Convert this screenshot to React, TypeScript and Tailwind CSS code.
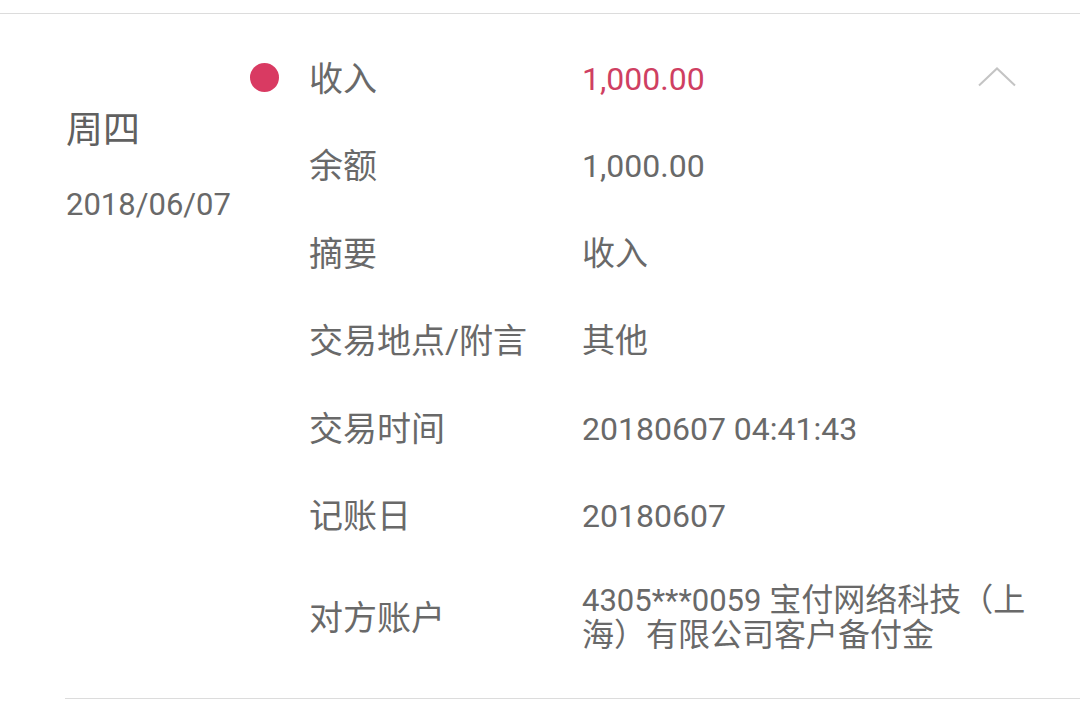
const font = {
  fontFamily: '"Roboto", "Noto Sans CJK SC", sans-serif',
};

type Row = { label: string; value: React.ReactNode; red?: boolean };

const rows: Row[] = [
  { label: "收入", value: "1,000.00", red: true },
  { label: "余额", value: "1,000.00" },
  { label: "摘要", value: <span className="text-[33px]">收入</span> },
  { label: "交易地点/附言", value: <span className="text-[33px]">其他</span> },
  { label: "交易时间", value: "20180607 04:41:43" },
  { label: "记账日", value: "20180607" },
];

function ChevronUp() {
  return (
    <svg width="38" height="20" viewBox="0 0 38 20" fill="none">
      <path d="M1 18.5 L19 1.5 L37 18.5" stroke="#c4c4c4" strokeWidth="2" />
    </svg>
  );
}

export default function App() {
  return (
    <div className="min-h-screen bg-white text-[#696969]" style={font}>
      <div className="h-[13px]" />
      <div className="border-t border-[#dcdcdc]" />

      <div className="flex pt-[21px] pb-[22px]">
        {/* Date column */}
        <div className="w-[250px] shrink-0 pl-[66px] pt-[74px]">
          <div className="text-[37px] leading-[44px] text-[#606060]">周四</div>
          <div className="text-[31px] leading-[40px] mt-[32px]">2018/06/07</div>
        </div>

        {/* Detail rows */}
        <div className="flex-1">
          {rows.map((r, i) => (
            <div key={r.label} className="flex items-center h-[87.5px]">
              <div className="w-[59px] shrink-0 flex">
                {i === 0 && (
                  <div className="w-[29px] h-[29px] rounded-full bg-[#d93a62] -mt-[2px]" />
                )}
              </div>
              <div className="w-[273px] shrink-0 text-[34px] leading-[40px]">{r.label}</div>
              <div
                className={
                  "flex-1 text-[32px] leading-[40px] " + (r.red ? "text-[#cf3f62]" : "")
                }
              >
                {r.value}
              </div>
              {i === 0 && (
                <div className="mr-[64px] -mt-[4px]">
                  <ChevronUp />
                </div>
              )}
            </div>
          ))}

          <div className="flex items-center py-[23px]">
            <div className="w-[59px] shrink-0" />
            <div className="w-[273px] shrink-0 text-[34px] leading-[40px]">对方账户</div>
            <div className="w-[462px] text-[32px] leading-[35px]">
              <span className="text-[31px]">4305***0059 </span>
              宝付网络科技（上海）有限公司客户备付金
            </div>
          </div>
        </div>
      </div>

      <div className="ml-[65px] border-t border-[#dcdcdc]" />
    </div>
  );
}
